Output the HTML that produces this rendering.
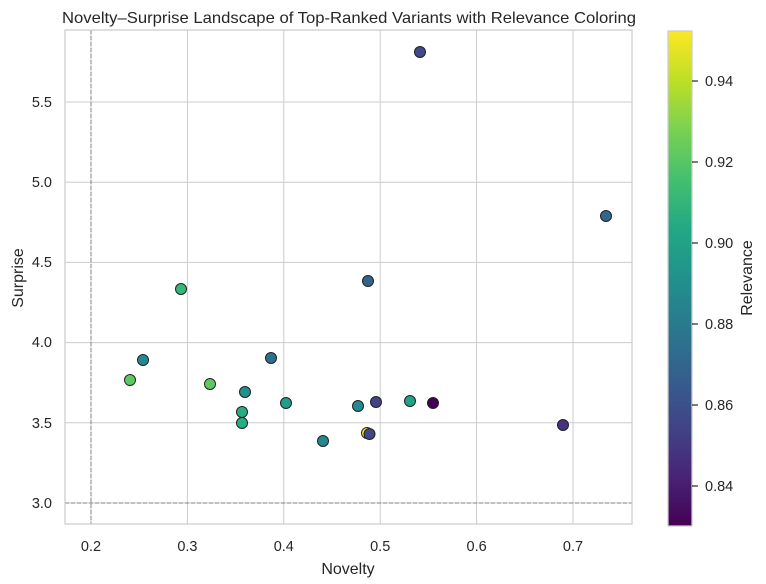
<!DOCTYPE html><html><head><style>html,body{margin:0;padding:0;background:#fff}svg{display:block}</style></head><body>
<svg width="766" height="584" viewBox="0 0 766 584" xmlns="http://www.w3.org/2000/svg" font-family="Liberation Sans, DejaVu Sans, sans-serif">
<defs><linearGradient id="v" x1="0" y1="1" x2="0" y2="0">
<stop offset="0" stop-color="#440154"/><stop offset="0.1" stop-color="#482475"/><stop offset="0.2" stop-color="#414487"/><stop offset="0.3" stop-color="#355f8d"/><stop offset="0.4" stop-color="#2a788e"/><stop offset="0.5" stop-color="#21918c"/><stop offset="0.6" stop-color="#22a884"/><stop offset="0.7" stop-color="#44bf70"/><stop offset="0.8" stop-color="#7ad151"/><stop offset="0.9" stop-color="#bddf26"/><stop offset="1" stop-color="#fde725"/></linearGradient></defs>
<rect width="766" height="584" fill="#fff"/>
<g stroke="#cccccc" stroke-width="1">
<line x1="91" y1="30" x2="91" y2="524"/><line x1="187.4" y1="30" x2="187.4" y2="524"/><line x1="283.8" y1="30" x2="283.8" y2="524"/><line x1="380.2" y1="30" x2="380.2" y2="524"/><line x1="476.6" y1="30" x2="476.6" y2="524"/><line x1="573" y1="30" x2="573" y2="524"/>
<line x1="65" y1="102" x2="632" y2="102"/><line x1="65" y1="182.2" x2="632" y2="182.2"/><line x1="65" y1="262.4" x2="632" y2="262.4"/><line x1="65" y1="342.6" x2="632" y2="342.6"/><line x1="65" y1="422.8" x2="632" y2="422.8"/><line x1="65" y1="503" x2="632" y2="503"/>
</g>
<g stroke="#808080" stroke-width="1" stroke-dasharray="4,2">
<line x1="91" y1="30" x2="91" y2="524"/><line x1="65" y1="503" x2="632" y2="503"/></g>
<rect x="65" y="30" width="567" height="494" fill="none" stroke="#cccccc" stroke-width="1.25"/>
<g stroke="#222" stroke-width="1">
<circle cx="420" cy="52" r="5.5" fill="#3e4a89"/>
<circle cx="606" cy="216" r="5.5" fill="#31688e"/>
<circle cx="368" cy="281" r="5.5" fill="#32648e"/>
<circle cx="181" cy="289" r="5.5" fill="#35b779"/>
<circle cx="143" cy="360" r="5.5" fill="#23898e"/>
<circle cx="271" cy="358" r="5.5" fill="#2c718e"/>
<circle cx="130" cy="380" r="5.5" fill="#5ec962"/>
<circle cx="210" cy="384" r="5.5" fill="#5ec962"/>
<circle cx="245" cy="392" r="5.5" fill="#21918c"/>
<circle cx="242" cy="412" r="5.5" fill="#29af7f"/>
<circle cx="242" cy="423" r="5.5" fill="#29af7f"/>
<circle cx="286" cy="403" r="5.5" fill="#1f9e89"/>
<circle cx="358" cy="406" r="5.5" fill="#238a8d"/>
<circle cx="376" cy="402" r="5.5" fill="#414487"/>
<circle cx="410" cy="401" r="5.5" fill="#20a386"/>
<circle cx="433" cy="403" r="5.5" fill="#440154"/>
<circle cx="323" cy="441" r="5.5" fill="#24878e"/>
<circle cx="367" cy="433" r="5.5" fill="#fde725"/>
<circle cx="369.5" cy="434" r="5.5" fill="#404688"/>
<circle cx="563" cy="425" r="5.5" fill="#46327e"/>
</g>
<g font-size="14.5" fill="#262626">
<g text-anchor="middle">
<text x="91" y="551">0.2</text><text x="187.4" y="551">0.3</text><text x="283.8" y="551">0.4</text><text x="380.2" y="551">0.5</text><text x="476.6" y="551">0.6</text><text x="573" y="551">0.7</text></g>
<g text-anchor="end">
<text x="52" y="107">5.5</text><text x="52" y="187">5.0</text><text x="52" y="267">4.5</text><text x="52" y="347">4.0</text><text x="52" y="428">3.5</text><text x="52" y="508">3.0</text></g>
<text x="348" y="574" text-anchor="middle" font-size="16">Novelty</text>
<text transform="translate(23,278) rotate(-90)" text-anchor="middle" font-size="16">Surprise</text>
<text x="62" y="23" font-size="16" textLength="574" lengthAdjust="spacingAndGlyphs">Novelty–Surprise Landscape of Top-Ranked Variants with Relevance Coloring</text>
</g>
<rect x="668" y="31" width="24" height="495" fill="url(#v)" stroke="#cccccc" stroke-width="1.25"/>
<g stroke="#262626" stroke-width="1.2">
<line x1="692" y1="81" x2="698" y2="81"/><line x1="692" y1="162" x2="698" y2="162"/><line x1="692" y1="243" x2="698" y2="243"/><line x1="692" y1="324" x2="698" y2="324"/><line x1="692" y1="405" x2="698" y2="405"/><line x1="692" y1="486" x2="698" y2="486"/></g>
<g font-size="14.5" fill="#262626">
<text x="705" y="86">0.94</text><text x="705" y="167">0.92</text><text x="705" y="248">0.90</text><text x="705" y="329">0.88</text><text x="705" y="410">0.86</text><text x="705" y="491">0.84</text>
<text transform="translate(752,278) rotate(-90)" text-anchor="middle" font-size="16">Relevance</text></g>
</svg></body></html>
